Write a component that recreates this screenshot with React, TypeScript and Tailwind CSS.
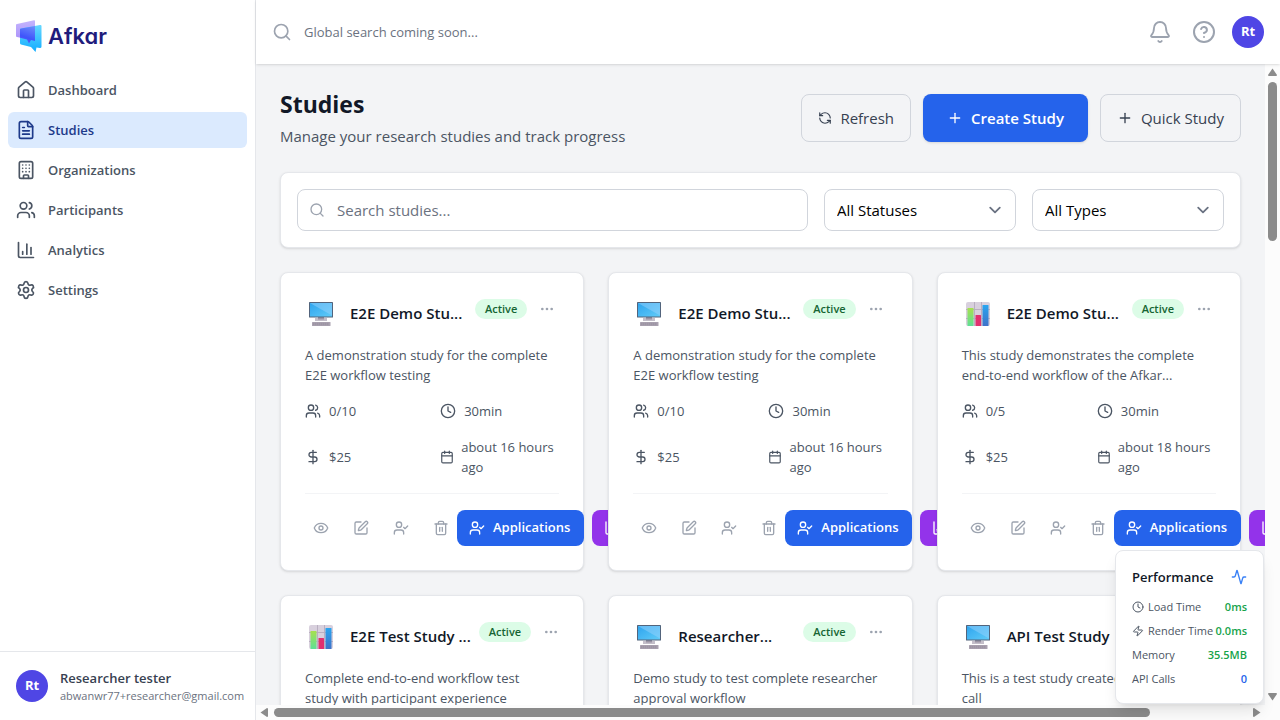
import {
  Activity,
  Bell,
  Building,
  Calendar,
  ChartColumn,
  CircleHelp,
  Clock,
  DollarSign,
  Ellipsis,
  Eye,
  FileText,
  House,
  Plus,
  RefreshCcw,
  Search,
  Settings,
  SquarePen,
  Trash2,
  UserCheck,
  Users,
  Zap,
  type LucideIcon,
} from 'lucide-react';

const nav: { label: string; icon: LucideIcon; active?: boolean }[] = [
  { label: 'Dashboard', icon: House },
  { label: 'Studies', icon: FileText, active: true },
  { label: 'Organizations', icon: Building },
  { label: 'Participants', icon: Users },
  { label: 'Analytics', icon: ChartColumn },
  { label: 'Settings', icon: Settings },
];

type Study = {
  kind: 'desktop' | 'chart';
  title: string;
  description: string[];
  participants: string;
  age: string;
};

const studies: Study[] = [
  {
    kind: 'desktop',
    title: 'E2E Demo Stu...',
    description: ['A demonstration study for the complete', 'E2E workflow testing'],
    participants: '0/10',
    age: 'about 16 hours ago',
  },
  {
    kind: 'desktop',
    title: 'E2E Demo Stu...',
    description: ['A demonstration study for the complete', 'E2E workflow testing'],
    participants: '0/10',
    age: 'about 16 hours ago',
  },
  {
    kind: 'chart',
    title: 'E2E Demo Stu...',
    description: ['This study demonstrates the complete', 'end-to-end workflow of the Afkar...'],
    participants: '0/5',
    age: 'about 18 hours ago',
  },
  {
    kind: 'chart',
    title: 'E2E Test Study ...',
    description: ['Complete end-to-end workflow test', 'study with participant experience'],
    participants: '0/10',
    age: 'about 18 hours ago',
  },
  {
    kind: 'desktop',
    title: 'Researcher...',
    description: ['Demo study to test complete researcher', 'approval workflow'],
    participants: '0/10',
    age: 'about 18 hours ago',
  },
  {
    kind: 'desktop',
    title: 'API Test Study',
    description: ['This is a test study created via API', 'call'],
    participants: '0/10',
    age: 'about 18 hours ago',
  },
];

function Logo() {
  return (
    <svg width="26" height="32" viewBox="0 0 26 32" aria-hidden="true">
      <defs>
        <linearGradient id="logo-back" x1="0" y1="0" x2="0" y2="1">
          <stop offset="0" stopColor="#c4b5fd" />
          <stop offset="1" stopColor="#a78bfa" />
        </linearGradient>
        <linearGradient id="logo-front" x1="0" y1="0" x2="0" y2="1">
          <stop offset="0" stopColor="#67d8ff" />
          <stop offset="1" stopColor="#12adff" />
        </linearGradient>
        <linearGradient id="logo-mid" x1="0.8" y1="0" x2="0.5" y2="1">
          <stop offset="0" stopColor="#6c8cfb" />
          <stop offset="0.7" stopColor="#3f55fb" />
          <stop offset="1" stopColor="#5a5cf5" />
        </linearGradient>
      </defs>
      <path d="M1 4 18 0.2Q19 0 19 1V21L15 20 13 23 10 19 1 17Q0 16.800 0 16V5Q0 4.200 1 4Z" fill="url(#logo-back)" />
      <path d="M5 8.500 24 5Q25.500 4.800 25.500 6V26.500Q25.500 28 24 28L20.500 27.500 19.500 32 15 27 5 24.500Q4 24.200 4 23V9.500Q4 8.700 5 8.500Z" fill="url(#logo-front)" />
      <path d="M5 8.500 19 5.900V21L15 20 13 23.500 11 19.500 4 17.700V9.500Q4 8.700 5 8.500Z" fill="url(#logo-mid)" />
    </svg>
  );
}

function DesktopGlyph() {
  return (
    <svg width="24" height="24" viewBox="0 0 24 24" aria-hidden="true">
      <defs>
        <linearGradient id="screen" x1="0" y1="0" x2="1" y2="1">
          <stop offset="0" stopColor="#2fa4ee" />
          <stop offset="1" stopColor="#5fcbf8" />
        </linearGradient>
      </defs>
      <path d="M6 16h12v3H6z" fill="#c4bfca" />
      <path d="M9 15h6v2.500H9z" fill="#9a94a4" />
      <rect x="0" y="0" width="24" height="15.500" rx="0.600" fill="#52647c" />
      <rect x="1" y="1" width="22" height="13.500" fill="url(#screen)" />
      <path d="M1 1h22v12.500z" fill="#8fd0fb" fillOpacity="0.550" />
      <rect x="3" y="20" width="18.500" height="4" rx="0.500" fill="#aaa2b0" />
      <path d="M4 21.300h16M4 22.700h16" stroke="#8f8797" strokeWidth="0.600" strokeDasharray="1.500 0.500" />
    </svg>
  );
}

function ChartGlyph() {
  return (
    <svg width="24" height="24" viewBox="0 0 24 24" aria-hidden="true">
      <defs>
        <linearGradient id="bar-green" x1="0" y1="0" x2="0" y2="1">
          <stop offset="0" stopColor="#a6e04f" />
          <stop offset="1" stopColor="#5fe096" />
        </linearGradient>
        <linearGradient id="bar-blue" x1="0" y1="0" x2="0" y2="1">
          <stop offset="0" stopColor="#2aa5f0" />
          <stop offset="1" stopColor="#3f72c8" />
        </linearGradient>
      </defs>
      <rect width="24" height="24" rx="2" fill="#d8d0dd" />
      <path d="M0 7.500h24M0 16.500h24M8.500 0v24M15.500 0v24" stroke="#b6acbd" strokeWidth="0.900" />
      <rect x="1.500" y="6" width="6" height="18" rx="0.500" fill="url(#bar-green)" />
      <rect x="9.500" y="13" width="5.500" height="11" rx="0.500" fill="#e2306f" />
      <rect x="16.500" y="3" width="6" height="21" rx="0.500" fill="url(#bar-blue)" />
    </svg>
  );
}

function Sidebar() {
  return (
    <aside className="flex w-64 shrink-0 flex-col border-r border-gray-200 bg-white">
      <a href="#home" className="flex h-[72px] items-center gap-1.5 px-4">
        <Logo />
        <span className="font-['Inter',sans-serif] text-[22px] leading-7 font-semibold text-[#1f1c7c] [font-feature-settings:'cv11']">
          Afkar
        </span>
      </a>
      <nav className="flex flex-1 flex-col gap-1 px-2">
        {nav.map(({ label, icon: Icon, active }) => (
          <a
            key={label}
            href={`#${label.toLowerCase()}`}
            className={
              active
                ? 'flex h-9 items-center gap-3 rounded-md bg-[#dbeafe] px-2 text-[13px] font-semibold text-[#1e3a8a]'
                : 'flex h-9 items-center gap-3 rounded-md px-2 text-[13px] font-semibold text-[#4b5563]'
            }
          >
            <Icon size={20} />
            <span className="pt-px">{label}</span>
          </a>
        ))}
      </nav>
      <div className="flex items-center gap-3 border-t border-gray-200 p-4 pr-0">
        <span className="flex size-8 shrink-0 items-center justify-center rounded-full bg-[#4f46e5] text-[13px] font-bold text-white">
          Rt
        </span>
        <div>
          <p className="text-[13px] leading-5 font-semibold text-[#374151]">Researcher tester</p>
          <p className="text-[11px] leading-4 text-[#6b7280]">abwanwr77+researcher@gmail.com</p>
        </div>
      </div>
    </aside>
  );
}

function TopBar() {
  return (
    <header className="z-10 flex h-16 shrink-0 items-center gap-5 bg-white px-4 shadow-sm">
      <label className="flex flex-1 items-center gap-3 text-[#9ca3af]">
        <Search size={20} />
        <input
          type="text"
          aria-label="Global search"
          placeholder="Global search coming soon..."
          className="flex-1 pt-0.5 text-[13px] text-gray-900 outline-none placeholder:text-[#6b7280]"
        />
      </label>
      <button type="button" aria-label="Notifications" className="text-[#9ca3af]">
        <Bell size={24} strokeWidth={1.8} />
      </button>
      <button type="button" aria-label="Help" className="text-[#9ca3af]">
        <CircleHelp size={24} />
      </button>
      <button
        type="button"
        aria-label="Account"
        className="-ml-1 flex size-8 items-center justify-center rounded-full bg-[#4f46e5] text-[13px] font-bold text-white"
      >
        Rt
      </button>
    </header>
  );
}

function Select({ label, option }: { label: string; option: string }) {
  return (
    <div className="relative w-48 shrink-0">
      <select
        aria-label={label}
        className="h-[42px] w-full appearance-none rounded-lg border border-gray-300 bg-white px-3 text-[15px] text-black"
      >
        <option>{option}</option>
      </select>
      <svg
        viewBox="0 0 20 20"
        className="pointer-events-none absolute top-[9px] right-[9px] size-6 text-gray-500"
        fill="none"
        stroke="currentColor"
        strokeWidth="1.500"
        strokeLinecap="round"
        strokeLinejoin="round"
      >
        <path d="M6 8l4 4 4-4" />
      </svg>
    </div>
  );
}

function IconButton({ label, icon: Icon }: { label: string; icon: LucideIcon }) {
  return (
    <button type="button" aria-label={label} className="shrink-0 p-2 text-[#9ca3af]">
      <Icon size={16} />
    </button>
  );
}

function StudyCard({ study }: { study: Study }) {
  return (
    <article className="min-w-0 rounded-lg border border-gray-200 bg-white p-6 shadow-sm">
      <div className="flex items-start justify-between gap-2">
        <div className="flex shrink-0 items-center gap-3">
          <span className="flex h-8 w-[33px] items-center px-1 pt-0.5">
            {study.kind === 'desktop' ? <DesktopGlyph /> : <ChartGlyph />}
          </span>
          <h3 className="text-[15px] leading-6 font-semibold whitespace-nowrap text-[#111827]">{study.title}</h3>
        </div>
        <div className="flex shrink-0 items-center gap-2">
          <span className="rounded-full bg-[#dcfce7] px-2.5 py-0.5 text-[11px] leading-4 font-semibold text-[#166534]">
            Active
          </span>
          <button type="button" aria-label="More options" className="p-1 text-[#9ca3af]">
            <Ellipsis size={16} />
          </button>
        </div>
      </div>
      <p className="mt-4 text-[13px] leading-5 whitespace-nowrap text-[#4b5563]">
        {study.description[0]}
        <br />
        {study.description[1]}
      </p>
      <div className="mt-4 grid grid-cols-2 gap-4 text-[13px] leading-5 text-[#4b5563]">
        <div className="flex items-center gap-2">
          <Users size={16} />
          {study.participants}
        </div>
        <div className="flex items-center gap-2">
          <Clock size={16} />
          30min
        </div>
        <div className="flex items-center gap-2">
          <DollarSign size={16} />
          $25
        </div>
        <div className="flex items-center gap-[7px]">
          <Calendar size={14} className="shrink-0" />
          {study.age}
        </div>
      </div>
      <div className="mt-4 flex items-center border-t border-gray-100 pt-4">
        <div className="flex shrink-0 gap-2">
          <IconButton label="View" icon={Eye} />
          <IconButton label="Edit" icon={SquarePen} />
          <IconButton label="Participants" icon={UserCheck} />
          <IconButton label="Delete" icon={Trash2} />
        </div>
        <div className="flex shrink-0 gap-2">
          <button
            type="button"
            className="flex h-9 min-w-[127px] items-center gap-2 rounded-lg bg-[#2563eb] px-3 text-[13px] font-semibold text-white"
          >
            <UserCheck size={16} />
            Applications
          </button>
          <button
            type="button"
            aria-label="Results"
            className="flex h-9 w-24 items-center rounded-lg bg-[#9333ea] px-3 text-white"
          >
            <ChartColumn size={16} />
          </button>
        </div>
      </div>
    </article>
  );
}

function PerformancePanel() {
  return (
    <section className="absolute right-4 bottom-4 z-20 w-[149px] rounded-lg border border-gray-200 bg-white p-4 shadow-lg">
      <div className="mb-3 flex items-center justify-between">
        <h2 className="text-[13px] leading-5 font-semibold text-[#111827]">Performance</h2>
        <Activity size={16} className="text-[#3b82f6]" />
      </div>
      <dl className="flex flex-col gap-2 text-[11px] leading-4 whitespace-nowrap">
        <div className="flex justify-between">
          <dt className="flex items-center gap-1 text-[#4b5563]">
            <Clock size={12} />
            Load Time
          </dt>
          <dd className="font-semibold text-[#16a34a]">0ms</dd>
        </div>
        <div className="flex justify-between">
          <dt className="flex items-center gap-1 text-[#4b5563]">
            <Zap size={12} />
            Render Time
          </dt>
          <dd className="font-semibold text-[#16a34a]">0.0ms</dd>
        </div>
        <div className="flex justify-between">
          <dt className="text-[#4b5563]">Memory</dt>
          <dd className="font-semibold text-[#16a34a]">35.5MB</dd>
        </div>
        <div className="flex justify-between">
          <dt className="text-[#4b5563]">API Calls</dt>
          <dd className="font-semibold text-[#2563eb]">0</dd>
        </div>
      </dl>
    </section>
  );
}

function VerticalScrollbar() {
  return (
    <div className="flex w-[15px] shrink-0 flex-col items-center bg-[#fcfcfc] py-1" aria-hidden="true">
      <svg width="9" height="8" viewBox="0 0 9 8" fill="#8b8b8b">
        <path d="M4.500 0.500 9 7Q9 8 8 8H1Q0 8 0 7Z" />
      </svg>
      <div className="mt-1.5 flex-1">
        <div className="h-[26%] w-[9px] rounded-full bg-[#8b8b8b]" />
      </div>
      <svg width="9" height="8" viewBox="0 0 9 8" fill="#8b8b8b">
        <path d="M4.500 7.500 0 1Q0 0 1 0H8Q9 0 9 1Z" />
      </svg>
    </div>
  );
}

function HorizontalScrollbar() {
  return (
    <div className="flex h-[15px] shrink-0 items-center bg-[#fcfcfc] pr-[19px] pl-1" aria-hidden="true">
      <svg width="8" height="9" viewBox="0 0 8 9" fill="#8b8b8b">
        <path d="M0.500 4.500 7 0Q8 0 8 1V8Q8 9 7 9Z" />
      </svg>
      <div className="mx-1.5 flex-1">
        <div className="h-[9px] w-[90%] rounded-full bg-[#8b8b8b]" />
      </div>
      <svg width="8" height="9" viewBox="0 0 8 9" fill="#8b8b8b">
        <path d="M7.500 4.500 1 9Q0 9 0 8V1Q0 0 1 0Z" />
      </svg>
    </div>
  );
}

export default function App() {
  return (
    <div className="relative flex h-screen overflow-hidden bg-gray-100 font-['Open_Sans','Noto_Sans',sans-serif]">
      <Sidebar />
      <div className="flex min-w-0 flex-1 flex-col">
        <TopBar />
        <div className="flex min-h-0 flex-1">
          <main className="min-w-0 flex-1 overflow-hidden p-6">
            <div className="flex items-center justify-between">
              <div>
                <h1 className="text-[23px] leading-8 font-bold text-[#111827]">Studies</h1>
                <p className="mt-1 text-[15px] leading-6 text-[#4b5563]">
                  Manage your research studies and track progress
                </p>
              </div>
              <div className="flex gap-3 text-[15px]">
                <button
                  type="button"
                  className="flex h-12 items-center gap-2 rounded-lg border border-gray-300 px-4 text-[#374151]"
                >
                  <RefreshCcw size={14} />
                  Refresh
                </button>
                <button
                  type="button"
                  className="flex h-12 items-center gap-2 rounded-lg bg-[#2563eb] px-6 font-semibold text-white shadow-sm"
                >
                  <Plus size={16} />
                  Create Study
                </button>
                <button
                  type="button"
                  className="flex h-12 items-center gap-2 rounded-lg border border-gray-300 px-4 text-[#374151]"
                >
                  <Plus size={16} />
                  Quick Study
                </button>
              </div>
            </div>
            <div className="mt-6 flex gap-4 rounded-lg border border-gray-200 bg-white p-4 shadow-sm">
              <label className="flex h-[42px] flex-1 items-center gap-3 rounded-lg border border-gray-300 px-[11px] text-[#9ca3af]">
                <Search size={16} />
                <input
                  type="text"
                  aria-label="Search studies"
                  placeholder="Search studies..."
                  className="flex-1 text-[15px] text-gray-900 outline-none placeholder:text-[#6b7280]"
                />
              </label>
              <Select label="Status" option="All Statuses" />
              <Select label="Type" option="All Types" />
            </div>
            <div className="mt-6 grid grid-cols-3 gap-6">
              {studies.map((study, index) => (
                <StudyCard key={index} study={study} />
              ))}
            </div>
          </main>
          <VerticalScrollbar />
        </div>
        <HorizontalScrollbar />
      </div>
      <PerformancePanel />
    </div>
  );
}
